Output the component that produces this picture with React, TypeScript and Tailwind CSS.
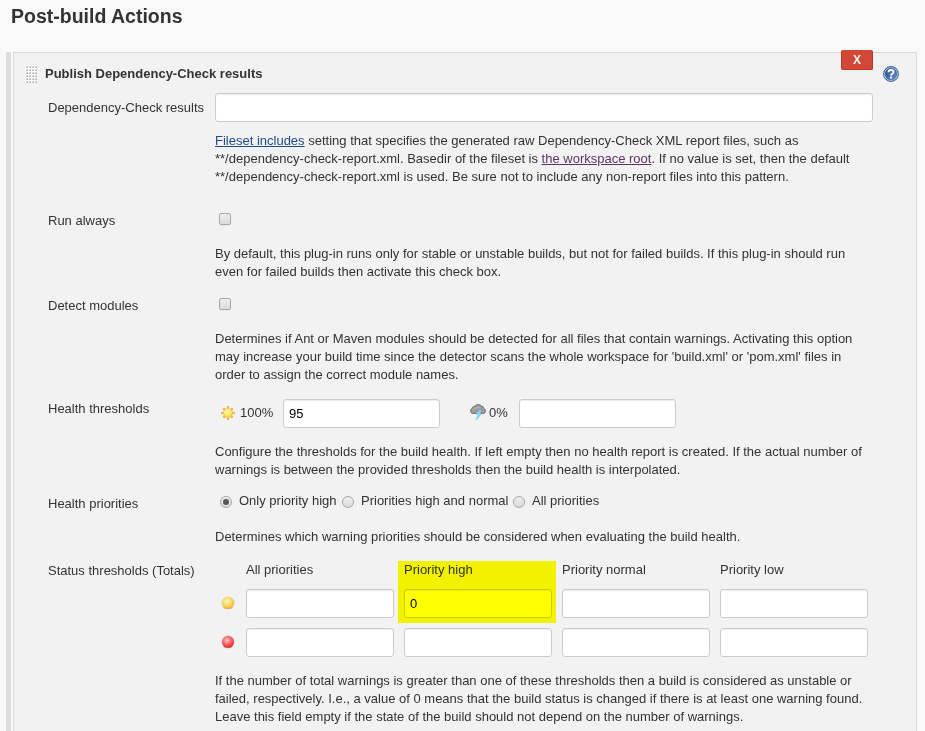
import React from 'react';

function Field({ className = '', value }: { className?: string; value?: string }) {
  return (
    <input
      type="text"
      defaultValue={value}
      className={`block h-[29px] rounded-[3px] border border-[#ccc] bg-white px-[5px] text-[13px] text-black shadow-[inset_0_1px_1px_rgba(0,0,0,0.075)] outline-none ${className}`}
    />
  );
}

function Row({ label, className, labelClass = 'pt-px', children }: { label: string; className: string; labelClass?: string; children: React.ReactNode }) {
  return (
    <div className={`flex ${className}`}>
      <div className={`w-[167px] shrink-0 ${labelClass}`}>{label}</div>
      <div className="w-[658px] shrink-0">{children}</div>
    </div>
  );
}

function Checkbox() {
  return <div className="ml-1 h-3 w-3 rounded-[2px] border border-[#a9a9a9] bg-gradient-to-b from-[#eee] to-[#dcdcdc] shadow-[0_1px_0_rgba(0,0,0,0.04)]" />;
}

function Radio({ checked = false }: { checked?: boolean }) {
  return (
    <span className="mt-1 flex h-3 w-3 shrink-0 items-center justify-center rounded-full border border-[#a6a6a6] bg-gradient-to-b from-[#eee] to-[#dcdcdc]">
      {checked && <span className="h-1.5 w-1.5 rounded-full bg-[#555]" />}
    </span>
  );
}

function DragHandle() {
  const dots = [];
  for (let y = 0; y < 6; y++) for (let x = 0; x < 4; x++) dots.push([x * 3, y * 3]);
  return (
    <svg width="12" height="18" viewBox="0 0 12 18" shapeRendering="crispEdges">
      <rect width="12" height="18" fill="#fafafa" />
      {dots.map(([x, y]) => (
        <g key={`${x}-${y}`}>
          <rect x={x + 1} y={y + 1} width="2" height="2" fill="#c8c8c8" />
          <rect x={x + 1} y={y + 1} width="1" height="1" fill="#e4e4e4" />
          <rect x={x + 2} y={y + 2} width="1" height="1" fill="#b0b0b0" />
        </g>
      ))}
    </svg>
  );
}

function Sun() {
  return (
    <svg width="16" height="16" viewBox="0 0 16 16">
      <defs>
        <radialGradient id="sun" cx=".4" cy=".35" r=".7">
          <stop offset="0" stopColor="#fffbb8" />
          <stop offset=".6" stopColor="#fde860" />
          <stop offset="1" stopColor="#f9bd35" />
        </radialGradient>
      </defs>
      <g fill="#f6b04a">
        <rect x="7" y="1" width="2" height="2" />
        <rect x="7" y="13" width="2" height="2" />
        <rect x="1" y="7" width="2" height="2" />
        <rect x="13" y="7" width="2" height="2" />
        <rect x="3" y="3" width="2" height="2" />
        <rect x="11" y="3" width="2" height="2" />
        <rect x="3" y="11" width="2" height="2" />
        <rect x="11" y="11" width="2" height="2" />
      </g>
      <circle cx="8" cy="8" r="4.6" fill="url(#sun)" stroke="#f7b84a" strokeWidth=".8" />
    </svg>
  );
}

function Storm() {
  return (
    <svg width="16" height="16" viewBox="0 0 16 16">
      <path d="M2.5 9.5Q.5 9 .5 6.8Q.6 4.8 2.2 4.5Q2.6 2.2 4.8 2.2Q6 .5 8.3 .6Q10.4 .6 11.2 2Q13.4 2 13.8 4.4Q15.5 5.2 15.5 7Q15.3 9.5 13 9.5L3 9.5Z" fill="#989895" stroke="#6a6c68" strokeWidth=".9" />
      <path d="M3 6.2Q4 4.2 6 4.4Q8 2.2 10 4.2" fill="none" stroke="#b0b0ad" strokeWidth="1.8" />
      <path d="M9.6 6.2L6.4 10.2L8.5 10.6L6.4 15.5L11.2 9.9L9.4 9.4L11.4 6.2Z" fill="#8fdcff" stroke="#6fcdf8" />
    </svg>
  );
}

function Ball({ red = false }: { red?: boolean }) {
  const id = red ? 'ball-red' : 'ball-yellow';
  return (
    <svg width="16" height="16" viewBox="0 0 16 16">
      <defs>
        <radialGradient id={id} cx=".42" cy=".36" r=".62">
          <stop offset="0" stopColor={red ? '#ffc4c4' : '#fff8c0'} />
          <stop offset=".55" stopColor={red ? '#f86868' : '#fcdc68'} />
          <stop offset="1" stopColor={red ? '#ee2a30' : '#f9b233'} />
        </radialGradient>
      </defs>
      <ellipse cx="8" cy="12.4" rx="4.6" ry="1.6" fill="#777" opacity=".4" />
      <circle cx="8" cy="7.9" r="6" fill={`url(#${id})`} stroke={red ? '#c96060' : '#d4b46a'} strokeWidth=".4" />
    </svg>
  );
}

function HelpIcon() {
  return (
    <svg width="16" height="16" viewBox="0 0 16 16">
      <defs>
        <linearGradient id="help" x1="0" y1="0" x2="1" y2="1">
          <stop offset="0" stopColor="#1f4784" />
          <stop offset="1" stopColor="#6c94c8" />
        </linearGradient>
      </defs>
      <circle cx="8" cy="8" r="7.4" fill="#fff" stroke="#3465a4" strokeWidth="1.1" />
      <circle cx="8" cy="8" r="6" fill="url(#help)" stroke="#204a87" strokeWidth=".5" />
      <path d="M5.5 6.2Q5.6 4 8 4Q10.5 4 10.5 6Q10.5 7.2 9.1 7.8Q8 8.3 8 9.6M8 10.6V12.6" fill="none" stroke="#fff" strokeWidth="2" />
    </svg>
  );
}

const columns = 'grid grid-cols-[31px_158px_158px_158px_148px]';

export default function App() {
  return (
    <div className="h-[731px] w-[925px] overflow-hidden bg-[#f9f9f9] font-['Liberation_Sans',Arial,sans-serif] text-[13px] leading-[18px] whitespace-nowrap text-[#333]">
      <h1 className="h-[52px] pt-1 pl-[11px] text-[19.5px] leading-6 font-bold">Post-build Actions</h1>
      <div className="flex h-[679px] pl-1.5">
        <div className="mr-0.5 w-[5px] bg-[#ddd]" />
        <section className="relative w-[904px] border border-b-0 border-[#d8d8d8] bg-[#f2f2f2]">
          <button className="absolute -top-[3px] left-[827px] h-5 w-8 rounded-[2px] border border-[#c03527] border-t-[#d14836] bg-[#d14836] text-center text-[12px] leading-[18px] font-bold text-[#f5f5f5]">X</button>
          <div className="flex h-10 pt-3 pl-[11px]">
            <DragHandle />
            <h2 className="ml-2 leading-[18px] font-bold">Publish Dependency-Check results</h2>
            <div className="mr-[17px] ml-auto pt-px"><HelpIcon /></div>
          </div>
          <div className="pl-[34px]">
            <Row label="Dependency-Check results" className="h-[118px]" labelClass="pt-1.5">
              <Field className="w-[658px]" />
              <p className="mt-2.5">
                <a className="text-[#204a87] underline">Fileset includes</a> setting that specifies the generated raw Dependency-Check XML report files, such as<br />
                **/dependency-check-report.xml. Basedir of the fileset is <a className="text-[#5c3566] underline">the workspace root</a>. If no value is set, then the default<br />
                **/dependency-check-report.xml is used. Be sure not to include any non-report files into this pattern.
              </p>
            </Row>
            <Row label="Run always" className="h-[85px]">
              <div className="pt-0.5"><Checkbox /></div>
              <p className="mt-5">
                By default, this plug-in runs only for stable or unstable builds, but not for failed builds. If this plug-in should run<br />
                even for failed builds then activate this check box.
              </p>
            </Row>
            <Row label="Detect modules" className="h-[103px]">
              <div className="pt-0.5"><Checkbox /></div>
              <p className="mt-5">
                Determines if Ant or Maven modules should be detected for all files that contain warnings. Activating this option<br />
                may increase your build time since the detector scans the whole workspace for 'build.xml' or 'pom.xml' files in<br />
                order to assign the correct module names.
              </p>
            </Row>
            <Row label="Health thresholds" className="h-[95px]">
              <div className="flex h-[29px] pl-[5px]">
                <span className="pt-1.5"><Sun /></span>
                <span className="ml-1 w-[43px] pt-[5px]">100%</span>
                <Field className="w-[157px]" value="95" />
                <span className="ml-[30px] pt-[5px]"><Storm /></span>
                <span className="ml-[3px] w-[30px] pt-[5px]">0%</span>
                <Field className="w-[157px]" />
              </div>
              <p className="mt-[15px]">
                Configure the thresholds for the build health. If left empty then no health report is created. If the actual number of<br />
                warnings is between the provided thresholds then the build health is interpolated.
              </p>
            </Row>
            <Row label="Health priorities" className="h-[67px]">
              <div className="-mt-0.5 flex h-[18px] pl-[5px]">
                <Radio checked /><span className="ml-[7px] w-[103px]">Only priority high</span>
                <Radio /><span className="ml-[7px] w-[152px]">Priorities high and normal</span>
                <Radio /><span className="ml-[7px]">All priorities</span>
              </div>
              <p className="mt-[18px]">Determines which warning priorities should be considered when evaluating the build health.</p>
            </Row>
            <Row label="Status thresholds (Totals)" className="h-[180px]">
              <div className={columns}>
                <span />
                <span>All priorities</span>
                <span>Priority high</span>
                <span>Priority normal</span>
                <span>Priority low</span>
              </div>
              <div className={`${columns} mt-2.5 h-[39px]`}>
                <div className="pt-1.5 pl-[5px]"><Ball /></div>
                <Field className="w-[148px]" />
                <div className="relative">
                  <Field className="w-[148px]" value="0" />
                  <div className="absolute -top-7 -left-1.5 h-[62px] w-[158px] bg-[#ff0] mix-blend-multiply" />
                </div>
                <Field className="w-[148px]" />
                <Field className="w-[148px]" />
              </div>
              <div className={columns}>
                <div className="pt-1.5 pl-[5px]"><Ball red /></div>
                <Field className="w-[148px]" />
                <Field className="w-[148px]" />
                <Field className="w-[148px]" />
                <Field className="w-[148px]" />
              </div>
              <p className="mt-[15px]">
                If the number of total warnings is greater than one of these thresholds then a build is considered as unstable or<br />
                failed, respectively. I.e., a value of 0 means that the build status is changed if there is at least one warning found.<br />
                Leave this field empty if the state of the build should not depend on the number of warnings.
              </p>
            </Row>
          </div>
        </section>
      </div>
    </div>
  );
}
